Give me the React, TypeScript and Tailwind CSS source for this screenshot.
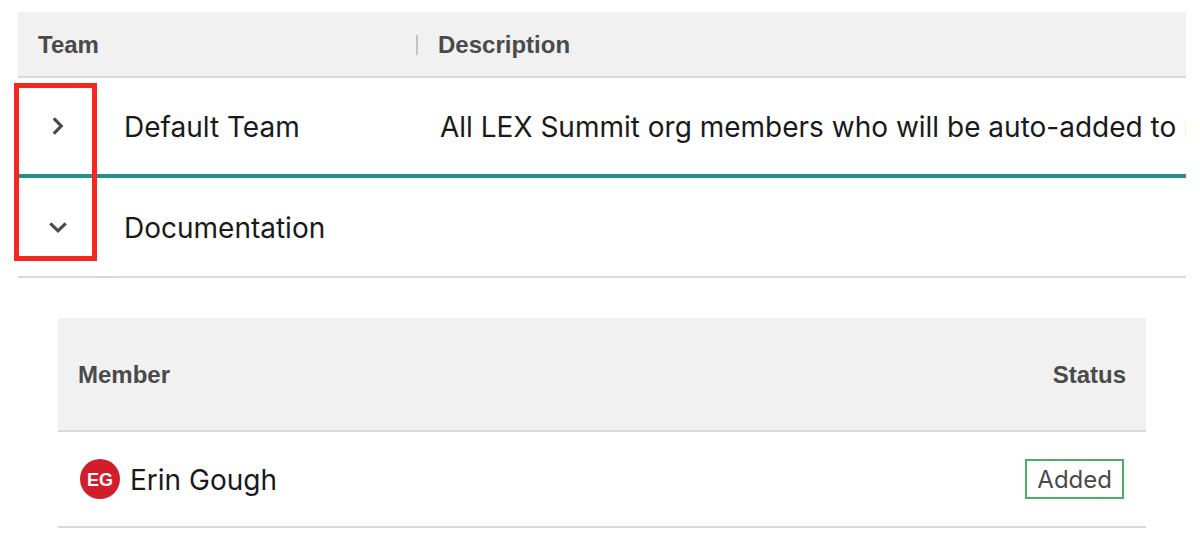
import React, { useState } from 'react';

interface Member {
  name: string;
  initials: string;
  status: string;
}

interface Team {
  id: string;
  name: string;
  description: string;
  members: Member[];
}

const teams: Team[] = [
  {
    id: 'default',
    name: 'Default Team',
    description: 'All LEX Summit org members who will be auto-added to n',
    members: [],
  },
  {
    id: 'documentation',
    name: 'Documentation',
    description: '',
    members: [{ name: 'Erin Gough', initials: 'EG', status: 'Added' }],
  },
];

const Chevron: React.FC<{ open: boolean }> = ({ open }) => (
  <svg viewBox="0 0 20 20" className="h-5 w-5" fill="none" stroke="#4a4a4a" strokeWidth="3.2" aria-hidden="true">
    {open ? <path d="M2.3 6.4 L10 13.8 L17.7 6.4" /> : <path d="M5.8 2.3 L13.2 10 L5.8 17.7" />}
  </svg>
);

const MemberTable: React.FC<{ members: Member[] }> = ({ members }) => (
  <table className="w-full border-separate border-spacing-0">
    <thead>
      <tr className="h-[114px] bg-[#f1f1f1] text-2xl text-[#4a4a4a]">
        <th className="border-b-2 border-[#d9d9d9] px-5 pt-0.5 text-left font-['Liberation_Sans',sans-serif] font-bold">Member</th>
        <th className="border-b-2 border-[#d9d9d9] px-5 pt-0.5 text-right font-['Liberation_Sans',sans-serif] font-bold">Status</th>
      </tr>
    </thead>
    <tbody>
      {members.map((member) => (
        <tr key={member.name} className="h-24">
          <td className="border-b-2 border-[#d9d9d9] px-[22px]">
            <div className="flex items-center gap-[10px]">
              <span className="flex h-10 w-10 items-center justify-center rounded-full bg-[#d21e2b] pt-0.5 font-['Liberation_Sans',sans-serif] text-lg font-bold text-white">
                {member.initials}
              </span>
              <span className="pt-0.5 text-[28px] leading-10">{member.name}</span>
            </div>
          </td>
          <td className="border-b-2 border-[#d9d9d9] px-[22px]">
            <div className="flex justify-end">
              <span className="flex h-10 items-center border-2 border-[#4caf68] px-[10px] pt-0.5 text-2xl text-[#4a4a4a]">
                {member.status}
              </span>
            </div>
          </td>
        </tr>
      ))}
    </tbody>
  </table>
);

export default function App() {
  const [openId, setOpenId] = useState<string | null>('documentation');

  return (
    <main className="min-h-screen bg-white pt-3 pr-[14px] pl-[18px] font-['Inter',sans-serif] text-[#1a1a1a]">
      <div className="relative">
        <table className="w-full table-fixed border-separate border-spacing-0">
          <colgroup>
            <col className="w-20" />
            <col className="w-80" />
            <col />
          </colgroup>
          <thead>
            <tr className="h-[66px] bg-[#f1f1f1] text-2xl text-[#4a4a4a]">
              <th colSpan={2} className="border-b-2 border-[#d9d9d9] pt-0.5 pl-5 text-left font-['Liberation_Sans',sans-serif] font-bold">
                <div className="flex items-center justify-between">
                  Team
                  <span className="h-5 w-[2px] bg-[#c4c4c4]" />
                </div>
              </th>
              <th className="border-b-2 border-[#d9d9d9] pt-0.5 pl-5 text-left font-['Liberation_Sans',sans-serif] font-bold">Description</th>
            </tr>
          </thead>
          <tbody>
            {teams.map((team) => {
              const open = team.id === openId;
              const border = open
                ? 'border-b-2 border-[#d9d9d9]'
                : 'border-b-4 border-[#23918a]';
              return (
                <React.Fragment key={team.id}>
                  <tr className="h-[100px]">
                    <td className={border}>
                      <button
                        type="button"
                        aria-label={team.name}
                        aria-expanded={open}
                        onClick={() => setOpenId(open ? null : team.id)}
                        className="mx-auto flex h-10 w-10 items-center justify-center"
                      >
                        <Chevron open={open} />
                      </button>
                    </td>
                    <td className={`pt-0.5 pl-[26px] text-[28px] leading-10 ${border}`}>{team.name}</td>
                    <td className={`overflow-hidden pt-0.5 pl-[22px] text-[28px] leading-10 whitespace-nowrap ${border}`}>
                      {team.description}
                    </td>
                  </tr>
                  {open && (
                    <tr>
                      <td colSpan={3} className="p-10 pb-0">
                        <MemberTable members={team.members} />
                      </td>
                    </tr>
                  )}
                </React.Fragment>
              );
            })}
          </tbody>
        </table>

        {/* Highlight around the expand controls */}
        <div className="pointer-events-none absolute top-[71px] -left-1 h-[178px] w-[83px] border-[5px] border-[#f3281f]" />
      </div>
    </main>
  );
}
